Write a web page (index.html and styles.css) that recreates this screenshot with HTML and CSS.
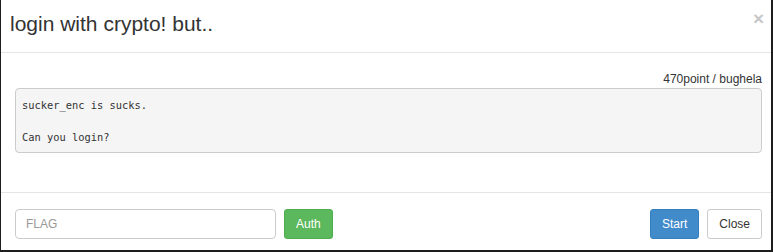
FILE: index.html
```html
<!DOCTYPE html>
<html>
<head>
<meta charset="utf-8">
<link rel="stylesheet" href="styles.css">
</head>
<body>
<div class="modal">
  <div class="modal-header">
    <h4 class="modal-title">login with crypto! but..</h4>
    <span class="close">×</span>
  </div>
  <div class="modal-body">
    <div class="meta">470point / bughela</div>
    <pre class="desc">sucker_enc is sucks.

Can you login?</pre>
  </div>
  <div class="modal-footer">
    <div class="auth-form">
      <input class="flag-input" type="text" placeholder="FLAG">
      <button class="btn btn-success">Auth</button>
    </div>
    <div class="actions">
      <button class="btn btn-primary">Start</button>
      <button class="btn btn-default">Close</button>
    </div>
  </div>
</div>
</body>
</html>
```

FILE: styles.css
```css
* { box-sizing: border-box; }
html, body { margin: 0; padding: 0; background: #fff; }
body {
  font-family: "Liberation Sans", Arial, sans-serif;
  font-size: 12px;
  color: #333;
  width: 773px;
  height: 252px;
  overflow: hidden;
}
.modal {
  width: 773px;
  height: 252px;
  border-left: 1px solid #1e1e1e;
  border-right: 2px solid #1e1e1e;
  border-bottom: 2px solid #1e1e1e;
  background: #fff;
  display: flex;
  flex-direction: column;
}
.modal-header {
  display: flex;
  justify-content: space-between;
  align-items: flex-start;
  height: 53px;
  padding: 12px 7px 0 9px;
  border-bottom: 1px solid #e5e5e5;
}
.modal-title {
  margin: 0;
  font-size: 21px;
  font-weight: normal;
  line-height: 23px;
  color: #333;
}
.close {
  font-size: 19px;
  font-weight: bold;
  line-height: 19px;
  color: #000;
  opacity: 0.22;
  margin-top: -3px;
}
.modal-body {
  height: 140px;
  padding: 18px 9px 0 14px;
  border-bottom: 1px solid #e5e5e5;
}
.meta {
  text-align: right;
  line-height: 17px;
  height: 17px;
}
.desc {
  margin: 0;
  padding: 8px 6px 7px;
  background: #f5f5f5;
  border: 1px solid #ccc;
  border-radius: 4px;
  font-family: "DejaVu Sans Mono", "Liberation Mono", monospace;
  font-size: 10.4px;
  line-height: 16px;
  color: #333;
}
.modal-footer {
  display: flex;
  justify-content: space-between;
  align-items: flex-start;
  padding: 16px 9px 0 14px;
}
.auth-form, .actions {
  display: flex;
  gap: 8px;
}
.flag-input {
  width: 261px;
  height: 30px;
  padding: 0 10px;
  border: 1px solid #ccc;
  border-radius: 4px;
  font-family: "Liberation Sans", Arial, sans-serif;
  font-size: 12px;
  color: #555;
  outline: none;
}
.flag-input::placeholder { color: #999; }
.btn {
  height: 30px;
  padding: 0 11px;
  border: 1px solid transparent;
  border-radius: 3px;
  font-family: "Liberation Sans", Arial, sans-serif;
  font-size: 12px;
  line-height: 28px;
  cursor: pointer;
}
.btn-success { background: #5cb85c; border-color: #4cae4c; color: #fff; }
.btn-primary { background: #428bca; border-color: #357ebd; color: #fff; }
.btn-default { background: #fff; border-color: #ccc; color: #333; }
```
